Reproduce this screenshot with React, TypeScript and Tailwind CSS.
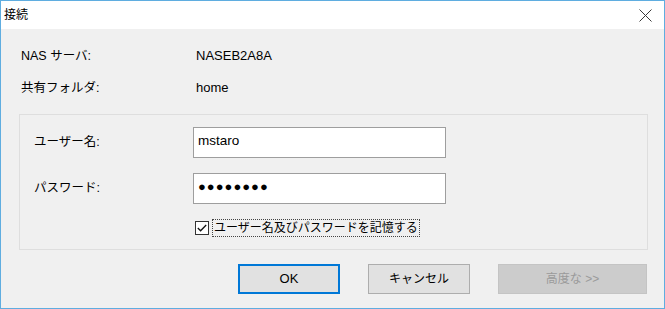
import React from "react";

const font = { fontFamily: '"Liberation Sans", "Noto Sans CJK JP", sans-serif' };

function CloseIcon() {
  return (
    <svg width="13" height="13" viewBox="0 0 13 13" className="block">
      <path d="M0.5 0.5 L12.5 12.5 M12.5 0.5 L0.5 12.5" stroke="#3a3a3a" strokeWidth="1" fill="none" />
    </svg>
  );
}

function InfoRow({ label, value }: { label: string; value: string }) {
  return (
    <div className="flex items-center h-[20px]">
      <div className="w-[175px] text-[12.5px] text-black">{label}</div>
      <div className="text-[13px] text-black">{value}</div>
    </div>
  );
}

function FieldRow({ label, children }: { label: string; children: React.ReactNode }) {
  return (
    <div className="flex items-center">
      <div className="w-[173px] pl-[14px] text-[12.5px] text-black">{label}</div>
      <div className="w-[253px] h-[31px] bg-white border border-[#9e9e9e] px-[4px] pt-[3px] flex items-start">
        {children}
      </div>
    </div>
  );
}

export default function App() {
  return (
    <div
      className="w-[665px] h-[309px] border border-[#5fade0] flex flex-col bg-[#f0f0f0] overflow-hidden"
      style={font}
    >
      <div className="h-[28px] bg-white flex items-center justify-between pl-[3px] pr-[12px]">
        <span className="text-[12px] text-black">接続</span>
        <CloseIcon />
      </div>

      <div className="flex-1 flex flex-col">
        <div className="pl-[20px] pt-[17px] flex flex-col gap-[12px]">
          <InfoRow label="NAS サーバ:" value="NASEB2A8A" />
          <InfoRow label="共有フォルダ:" value="home" />
        </div>

        <div className="ml-[18px] mt-[16px] w-[629px] border border-[#dedede] pt-[12px] pb-[12px] flex flex-col">
          <FieldRow label="ユーザー名:">
            <span className="text-[13.5px] text-black leading-[20px]">mstaro</span>
          </FieldRow>
          <div className="mt-[15px]">
            <FieldRow label="パスワード:">
              <span className="text-[13px] text-black leading-[20px] tracking-[1px]">●●●●●●●●</span>
            </FieldRow>
          </div>
          <div className="mt-[15px] h-[18px] flex items-center pl-[175px]">
            <div className="w-[14px] h-[14px] border border-[#333] bg-white flex items-center justify-center">
              <svg width="10" height="8" viewBox="0 0 10 8">
                <path d="M0.8 4 L3.6 6.8 L9.2 1" stroke="#111" strokeWidth="1.3" fill="none" />
              </svg>
            </div>
            <div className="ml-[3px] h-[18px] px-[1px] border border-dotted border-[#444] flex items-center text-[12px] text-black">
              ユーザー名及びパスワードを記憶する
            </div>
          </div>
        </div>

        <div className="mt-[14px] pl-[237px] flex gap-[28px]">
          <button className="w-[102px] h-[30px] bg-[#e1e1e1] border-2 border-[#0078d7] text-[13px] text-black">
            OK
          </button>
          <button className="w-[102px] h-[30px] bg-[#e1e1e1] border border-[#adadad] text-[12px] text-black">
            キャンセル
          </button>
          <button className="w-[149px] h-[30px] bg-[#cccccc] border border-[#c4c4c4] text-[12px] text-[#9a9a9a]">
            高度な &gt;&gt;
          </button>
        </div>
      </div>
    </div>
  );
}
